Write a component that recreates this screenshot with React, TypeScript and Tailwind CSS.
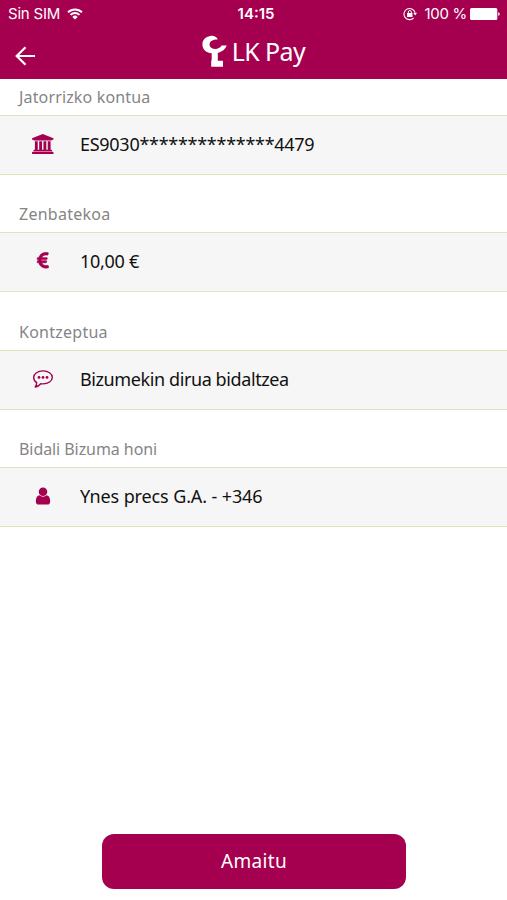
import type { ReactNode } from 'react'

const BankIcon = () => (
  <svg viewBox="0 0 1920 1792" className="h-5 w-[21.5px] fill-current">
    <path d="M960 0l960 384v128h-128q0 26-20.5 45t-48.5 19h-1526q-28 0-48.5-19t-20.5-45h-128v-128zm-704 640h256v768h128v-768h256v768h128v-768h256v768h128v-768h256v768h59q28 0 48.5 19t20.5 45v64h-1664v-64q0-26 20.5-45t48.5-19h59v-768zm1595 960q28 0 48.5 19t20.5 45v128h-1920v-128q0-26 20.5-45t48.5-19h1782z" />
  </svg>
)

const EuroIcon = () => (
  <svg viewBox="0 0 1792 1792" className="h-5 w-5 fill-current stroke-current [stroke-width:60]">
    <path d="M1360 1307l35 159q3 12-3 22.5t-17 14.5l-5 1q-4 2-10.5 3.5t-16 4.5-21.5 5.5-25.5 5-30 5-33.5 4.5-36.5 3-38.5 1q-234 0-409-130.5t-238-351.5h-95q-13 0-22.5-9.5t-9.5-22.5v-113q0-13 9.5-22.5t22.5-9.5h66q-2-57 1-105h-67q-14 0-23-9t-9-23v-114q0-14 9-23t23-9h98q67-210 243.5-338t400.5-128q102 0 194 23 11 3 20 15 6 11 3 24l-43 159q-3 13-14 19.5t-24 2.5l-4-1q-4-1-11.5-2.5l-17.5-3.5-22.5-3.5-26-3-29-2.5-29.5-1q-126 0-226 64t-150 176h468q16 0 25 12 10 12 7 26l-24 114q-5 26-32 26h-488q-3 37 0 105h459q15 0 25 12 9 12 6 27l-24 112q-2 11-11 18.5t-20 7.5h-387q48 117 149.5 185.5t228.5 68.5q18 0 36-1.5t33.5-3.5 29.5-4.5 24.5-5 18.5-4.5l12-3 5-2q13-5 26 2 12 7 15 21z" />
  </svg>
)

const CommentIcon = () => (
  <svg viewBox="0 0 20 18" className="h-[18px] w-5" fill="none">
    <path
      d="M10 .9c5.100 0 9.300 2.900 9.300 6.500s-4.200 6.500-9.300 6.500c-.8 0-1.500-.1-2.200-.2-1.400 1.700-3.200 2.900-5.600 3.300 1-1.100 1.400-2.600 1.500-4.300C1.800 11.500.7 9.600.7 7.400.7 3.800 4.900.9 10 .9z"
      stroke="currentColor"
      strokeWidth="1.4"
      strokeLinejoin="round"
    />
    <g fill="currentColor">
      <circle cx="6" cy="7.400" r="1.400" />
      <circle cx="10" cy="7.400" r="1.400" />
      <circle cx="14" cy="7.400" r="1.400" />
    </g>
  </svg>
)

const UserIcon = () => (
  <svg viewBox="0 0 1792 1792" className="h-5 w-5 fill-current">
    <path d="M1536 1399q0 109-62.5 187t-150.5 78h-854q-88 0-150.5-78t-62.5-187q0-85 8.500-160.500t31.500-152 58.500-131 94-89 134.500-34.500q131 128 313 128t313-128q76 0 134.500 34.500t94 89 58.500 131 31.500 152 8.500 160.500zm-256-887q0 159-112.500 271.500t-271.500 112.500-271.500-112.500-112.500-271.500 112.500-271.500 271.500-112.500 271.500 112.500 112.500 271.500z" />
  </svg>
)

const WifiIcon = () => (
  <svg viewBox="0 0 16 12" className="h-3 w-4" fill="none" stroke="white" strokeWidth="1.9">
    <path d="M1 4.300a10 10 0 0 1 14 0M3.500 6.900a6.300 6.300 0 0 1 9 0" />
    <path d="M8 11.600 5.400 8.900a3.700 3.700 0 0 1 5.200 0z" fill="white" stroke="none" />
  </svg>
)

const RotationLockIcon = () => (
  <svg viewBox="0 0 14 14" className="h-3.5 w-3.5" fill="none" stroke="white">
    <path d="M12 5.500A5.600 5.600 0 1 0 10.600 11" strokeWidth="1.1" />
    <path d="M10.300 5.800h3.700l-1.800 2.600z" fill="white" stroke="none" />
    <path d="M5.300 6.400V5a1.500 1.500 0 0 1 3 0v1.400" strokeWidth="1" />
    <path d="M4.100 6h5.400v4h-5.400z" fill="white" stroke="none" />
  </svg>
)

const BatteryIcon = () => (
  <svg viewBox="0 0 30 12" className="h-3 w-[30px] fill-white">
    <rect width="27.300" height="12" rx="1.500" />
    <path d="M28.200 4.200c2 .3 2 3.300 0 3.600z" />
  </svg>
)

const BackIcon = () => (
  <svg viewBox="0 0 20 20" className="h-5 w-5" fill="none" stroke="white" strokeWidth="2.200">
    <path d="M10.500 1.200 1.700 10l8.800 8.800M1.700 10H20" />
  </svg>
)

const LogoIcon = () => (
  <svg viewBox="0 0 26 32" className="h-8 w-[26px] fill-white">
    <path d="M15.800 4.600C14.600 1.600 11.500.4 8.200 1 3.700 1.800.4 5.100.4 9.200c0 5.300 4.200 8.900 9.300 9.100v7.300H9.200v6.200h11.800v-6.100h-5.200v-7.800c4.200-.9 7.600-3.500 9-7.300l-5.200-.1c-1.300 2.300-4 3.600-6.800 3.400-3.300-.2-5.400-2.300-5.200-5 .3-2.800 3.700-4.600 9-4.300z" />
  </svg>
)

type Field = {
  label: string
  labelClass: string
  value: ReactNode
  valueClass: string
  icon: ReactNode
}

const fields: Field[] = [
  {
    label: 'Jatorrizko kontua',
    labelClass: 'tracking-[0.15px]',
    value: 'ES9030**************4479',
    valueClass: 'tracking-[-0.28px]',
    icon: <BankIcon />,
  },
  {
    label: 'Zenbatekoa',
    labelClass: 'tracking-[0.25px]',
    value: '10,00 €',
    valueClass: 'tracking-[-0.3px]',
    icon: <EuroIcon />,
  },
  {
    label: 'Kontzeptua',
    labelClass: 'tracking-[0.25px]',
    value: 'Bizumekin dirua bidaltzea',
    valueClass: 'tracking-[-0.4px]',
    icon: <CommentIcon />,
  },
  {
    label: 'Bidali Bizuma honi',
    labelClass: 'tracking-[-0.07px]',
    value: 'Ynes precs G.A. - +346',
    valueClass: 'tracking-[-0.12px]',
    icon: <UserIcon />,
  },
]

function StatusBar() {
  return (
    <div className="grid h-7 grid-cols-3 items-center pr-[7px] pl-2 font-['Inter',sans-serif] text-[15px]">
      <div className="flex items-center gap-[7px]">
        <span className="tracking-[-0.2px]">Sin SIM</span>
        <WifiIcon />
      </div>
      <span className="pl-1 text-center font-semibold">14:15</span>
      <div className="flex items-center justify-end">
        <RotationLockIcon />
        <span className="mr-[3px] ml-2 tracking-[-0.3px] whitespace-nowrap">100 %</span>
        <BatteryIcon />
      </div>
    </div>
  )
}

function Header() {
  return (
    <header className="h-[79px] bg-[#a5004f] text-white">
      <StatusBar />
      <div className="grid h-[51px] grid-cols-[1fr_auto_1fr] items-center">
        <button type="button" aria-label="Atzera" className="mt-1 ml-[15px] w-5">
          <BackIcon />
        </button>
        <div className="-mt-[5px] flex items-center gap-1">
          <LogoIcon />
          <span className="text-[25px] leading-8 tracking-[-0.6px]">LK Pay</span>
        </div>
      </div>
    </header>
  )
}

export default function App() {
  return (
    <div className="flex h-[900px] w-[507px] flex-col overflow-hidden bg-white font-['Noto_Sans',sans-serif]">
      <Header />
      <main>
        {fields.map((field) => (
          <section key={field.label} className="h-[117.3px]">
            <h2 className="flex h-9 items-center pl-[19px] text-base text-[#858585]">
              <span className={field.labelClass}>{field.label}</span>
            </h2>
            <div className="flex h-[60px] items-center border-y-[1.5px] border-[#dce6b8] bg-[#f6f6f6] pb-0.5">
              <div className="ml-7 flex w-[30px] justify-center text-[#a5004f]">{field.icon}</div>
              <p className="ml-[22px] text-lg whitespace-nowrap text-[#111]">
                <span className={field.valueClass}>{field.value}</span>
              </p>
            </div>
          </section>
        ))}
      </main>
      <button
        type="button"
        className="mt-auto mb-[11px] ml-[102px] h-[55px] w-[304px] rounded-xl bg-[#a5004f] text-[19px] tracking-[0.3px] text-white"
      >
        Amaitu
      </button>
    </div>
  )
}
